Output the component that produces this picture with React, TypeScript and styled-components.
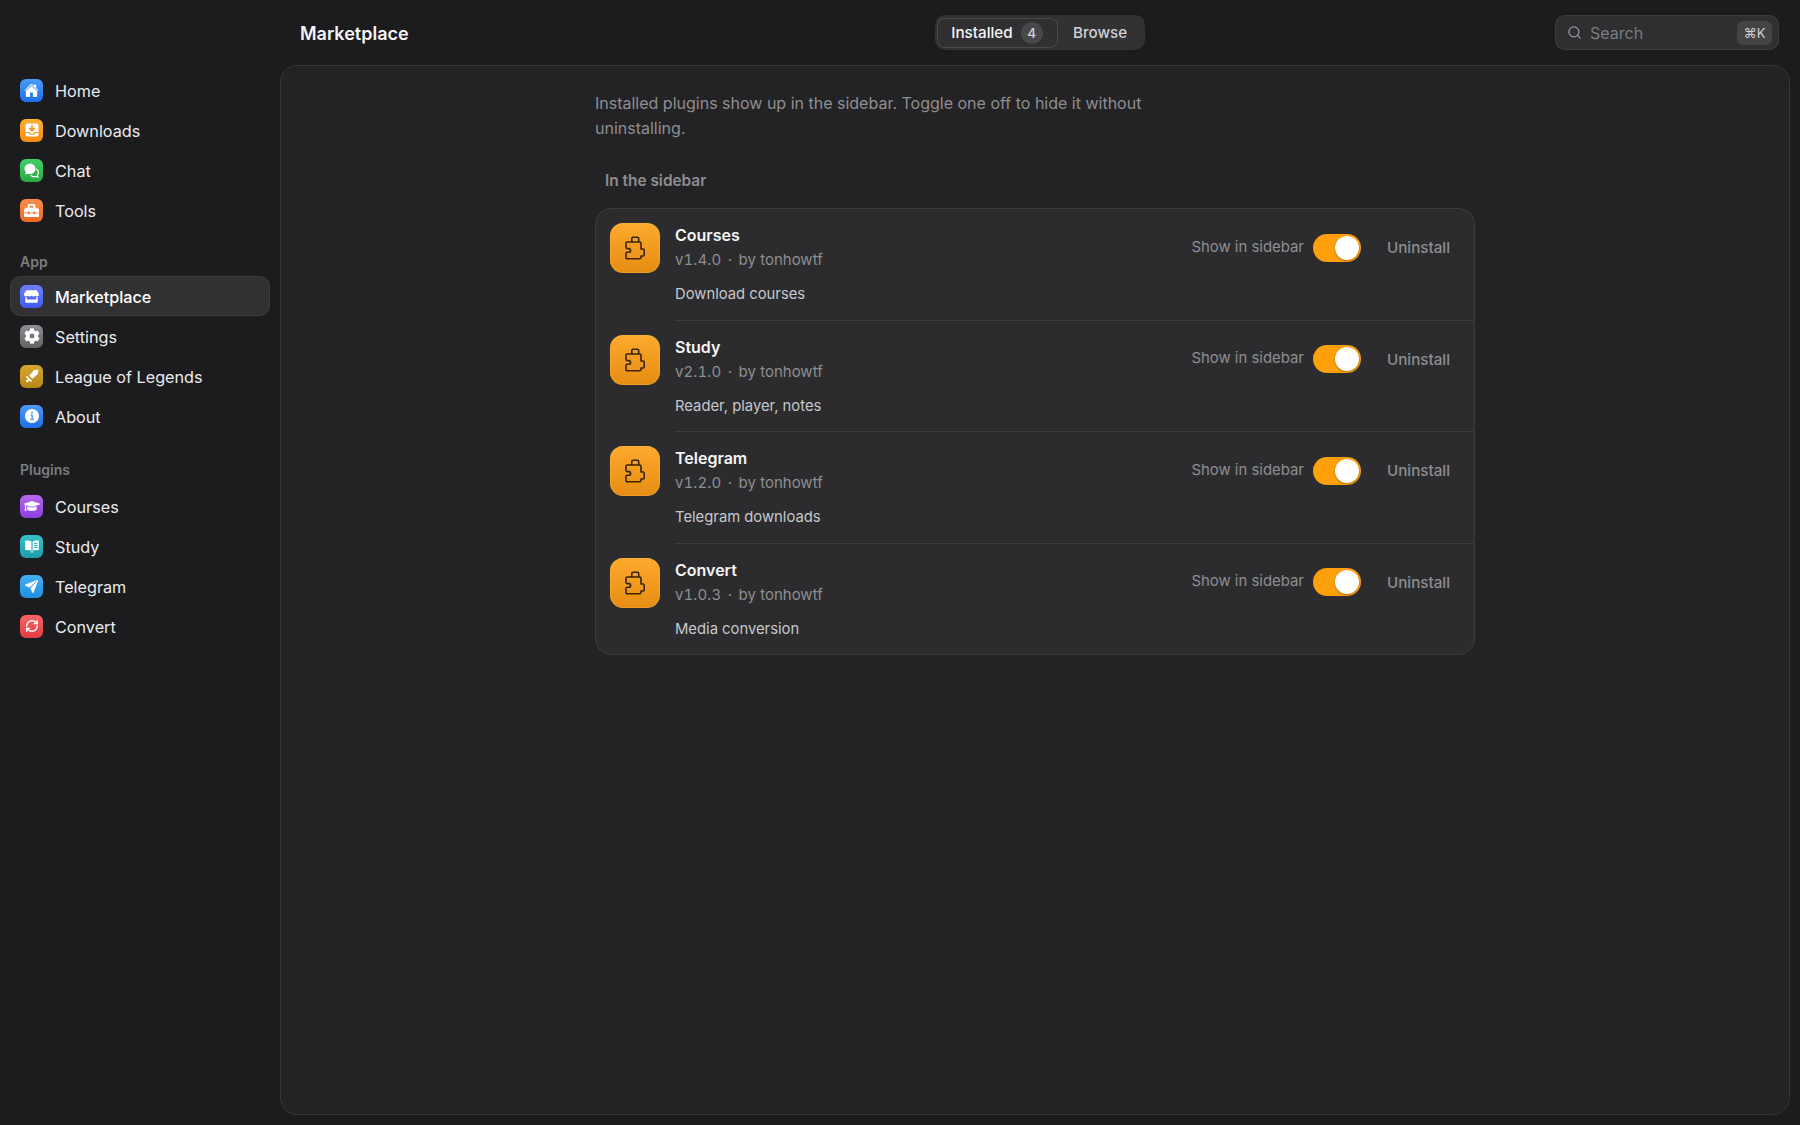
import { ReactNode } from 'react';
import styled, { createGlobalStyle } from 'styled-components';
import { Search, RefreshCw } from 'lucide-react';
import { IoHome, IoInformationCircle, IoPaperPlane } from 'react-icons/io5';
import { FaToolbox, FaStore, FaCog, FaGraduationCap } from 'react-icons/fa';

const GlobalStyle = createGlobalStyle`
  html, body {
    margin: 0;
    height: 100%;
    background: #1c1c1e;
  }
  body {
    font-family: Inter, 'Liberation Sans', sans-serif;
    color: #f2f2f7;
    -webkit-font-smoothing: antialiased;
  }
  #root {
    height: 100%;
  }
`;

const DownloadGlyph = () => (
  <svg width="16" height="16" viewBox="0 0 16 16">
    <rect x="1.5" y="1.5" width="13" height="13" rx="2" fill="#fff" />
    <path d="M8 3.5v5M5.6 6.4 8 8.8l2.4-2.4" stroke="#f28c12" strokeWidth="1.5" fill="none" strokeLinecap="round" strokeLinejoin="round" />
    <path d="M1.5 10.5h3.2l1 1.5h4.6l1-1.5h3.2" stroke="#f28c12" strokeWidth="1.2" fill="none" />
  </svg>
);

const ChatGlyph = () => (
  <svg width="17" height="17" viewBox="0 0 17 17">
    <path d="M7 1.5a5.6 5.6 0 0 1 5.6 5.3A5.6 5.6 0 0 1 7 12a6 6 0 0 1-2-.3L2.2 12.6l.7-2.5A5.3 5.3 0 0 1 1.4 6.8 5.6 5.6 0 0 1 7 1.5z" fill="#fff" />
    <path d="M13.6 7.2a4 4 0 0 1 1.8 3.4c0 1-.4 1.9-1 2.6l.5 2-2.2-.7a4.8 4.8 0 0 1-4.7-1" stroke="#fff" strokeWidth="1.2" fill="none" strokeLinecap="round" />
  </svg>
);

const SwordGlyph = () => (
  <svg width="16" height="16" viewBox="0 0 16 16" fill="#fff">
    <path d="M14.5 1.5 10 2.2 5.2 7.6l3.2 3.2 5.4-4.8z" />
    <path d="M3 7.8l5.2 5.2-1.1 1.1-1.6-1.6-2.2 2.2-1.6-1.6 2.2-2.2-2-2z" />
  </svg>
);

const BookGlyph = () => (
  <svg width="16" height="16" viewBox="0 0 16 16">
    <path d="M1.2 2.6c2.2-.4 4.6-.2 6.2.8v9.4c-1.6-.9-4-1.1-6.2-.7z" fill="#fff" />
    <path d="M14.8 2.6c-2.2-.4-4.6-.2-6.2.8v9.4c1.6-.9 4-1.1 6.2-.7z" fill="#fff" />
    <path d="M10 5.4h3.4M10 7.4h3.4M10 9.4h3.4" stroke="#2aa9b8" strokeWidth="1" />
    <path d="M7.4 13h1.2v2L8 14.5l-.6.5z" fill="#fff" />
  </svg>
);

const PuzzleGlyph = () => (
  <svg width="24" height="24" viewBox="0 0 24 24" fill="none" stroke="#3a2503" strokeWidth="1.6" strokeLinejoin="round">
    <path d="M8.8 6V2.4c0-.8.5-1.2 1.2-1.2h4.500c.7 0 1.200.4 1.200 1.200V6" />
    <path d="M4.200 6h12.600c.7 0 1.200.5 1.200 1.200V13h2c.8 0 1.200.5 1.200 1.200v4.600c0 .7-.4 1.200-1.200 1.200h-2v1.500c0 .7-.5 1.200-1.200 1.200H4.200c-.7 0-1.200-.5-1.200-1.200v-4.300c0-.6.4-1 1-1h2c1 0 1.600-.7 1.600-1.800s-.6-1.800-1.600-1.800H4c-.6 0-1-.4-1-1V7.200C3 6.500 3.500 6 4.200 6z" />
  </svg>
);

type NavEntry = { label: string; from: string; to: string; icon: ReactNode; active?: boolean };

const mainNav: NavEntry[] = [
  { label: 'Home', from: '#4a9bfa', to: '#1f6fe8', icon: <IoHome size={15} /> },
  { label: 'Downloads', from: '#ffb02e', to: '#f28c12', icon: <DownloadGlyph /> },
  { label: 'Chat', from: '#46d066', to: '#28a745', icon: <ChatGlyph /> },
  { label: 'Tools', from: '#ff8d4d', to: '#e86a20', icon: <FaToolbox size={15} /> },
];

const appNav: NavEntry[] = [
  { label: 'Marketplace', from: '#6a80ff', to: '#3f5cf0', icon: <FaStore size={15} />, active: true },
  { label: 'Settings', from: '#8e8e93', to: '#636366', icon: <FaCog size={16} /> },
  { label: 'League of Legends', from: '#d9a72e', to: '#b5851a', icon: <SwordGlyph /> },
  { label: 'About', from: '#4a9bfa', to: '#1f6fe8', icon: <IoInformationCircle size={18} /> },
];

const pluginNav: NavEntry[] = [
  { label: 'Courses', from: '#b469f0', to: '#8b3fd9', icon: <FaGraduationCap size={16} /> },
  { label: 'Study', from: '#36c0c8', to: '#1f9cab', icon: <BookGlyph /> },
  { label: 'Telegram', from: '#45aef5', to: '#2090e0', icon: <IoPaperPlane size={15} /> },
  { label: 'Convert', from: '#fb6468', to: '#e03d42', icon: <RefreshCw size={14} strokeWidth={2.4} /> },
];

const plugins = [
  { name: 'Courses', version: 'v1.4.0', description: 'Download courses' },
  { name: 'Study', version: 'v2.1.0', description: 'Reader, player, notes' },
  { name: 'Telegram', version: 'v1.2.0', description: 'Telegram downloads' },
  { name: 'Convert', version: 'v1.0.3', description: 'Media conversion' },
];

const NavRows = ({ items }: { items: NavEntry[] }) => (
  <>
    {items.map((item) => (
      <NavRow key={item.label} $active={item.active}>
        <NavIcon $from={item.from} $to={item.to}>
          {item.icon}
        </NavIcon>
        <NavText>{item.label}</NavText>
      </NavRow>
    ))}
  </>
);

const App = () => {
  return (
    <Shell>
      <GlobalStyle />
      <Sidebar>
        <NavRows items={mainNav} />
        <SectionLabel $top={23} $bottom={5}>App</SectionLabel>
        <NavRows items={appNav} />
        <SectionLabel $top={25} $bottom={7}>Plugins</SectionLabel>
        <NavRows items={pluginNav} />
      </Sidebar>
      <Main>
        <TopBar>
          <PageTitle>Marketplace</PageTitle>
          <Segments>
            <Segment $active>
              Installed
              <CountBadge>4</CountBadge>
            </Segment>
            <Segment>Browse</Segment>
          </Segments>
          <SearchBox>
            <Search size={15} color="#98989d" strokeWidth={2} />
            <SearchText>Search</SearchText>
            <ShortcutKey>⌘K</ShortcutKey>
          </SearchBox>
        </TopBar>
        <Panel>
          <Content>
            <Intro>
              Installed plugins show up in the sidebar. Toggle one off to hide it without uninstalling.
            </Intro>
            <GroupTitle>In the sidebar</GroupTitle>
            <Card>
              {plugins.map((plugin) => (
                <PluginRow key={plugin.name}>
                  <PluginIcon>
                    <PuzzleGlyph />
                  </PluginIcon>
                  <PluginBody>
                    <PluginInfo>
                      <PluginName>{plugin.name}</PluginName>
                      <PluginMeta>
                        <VersionText>{plugin.version}</VersionText>
                        <MetaDot>·</MetaDot>
                        by tonhowtf
                      </PluginMeta>
                      <PluginDescription>{plugin.description}</PluginDescription>
                    </PluginInfo>
                    <PluginActions>
                      <ToggleLabel>Show in sidebar</ToggleLabel>
                      <Toggle>
                        <Knob />
                      </Toggle>
                      <UninstallButton>Uninstall</UninstallButton>
                    </PluginActions>
                  </PluginBody>
                </PluginRow>
              ))}
            </Card>
          </Content>
        </Panel>
      </Main>
    </Shell>
  );
};

const Shell = styled.div`
  display: flex;
  height: 1125px;
  overflow: hidden;
  background: #1c1c1e;
`;

const Sidebar = styled.aside`
  width: 280px;
  flex: none;
  box-sizing: border-box;
  padding: 70px 10px 0;
`;

const NavRow = styled.div<{ $active?: boolean }>`
  display: flex;
  align-items: center;
  gap: 12px;
  height: 40px;
  box-sizing: border-box;
  padding-left: 10px;
  border-radius: 11px;
  font-size: 16.2px;
  font-weight: ${(p) => (p.$active ? 500 : 400)};
  color: ${(p) => (p.$active ? '#fff' : '#ebebf0')};
  background: ${(p) => (p.$active ? '#313133' : 'transparent')};
  box-shadow: ${(p) => (p.$active ? 'inset 0 0 0 1px #3c3c3e' : 'none')};
`;

const NavText = styled.span`
  padding-top: 1px;
`;

const NavIcon = styled.span<{ $from: string; $to: string }>`
  width: 23px;
  height: 23px;
  flex: none;
  display: flex;
  align-items: center;
  justify-content: center;
  border-radius: 6px;
  color: #fff;
  background: linear-gradient(180deg, ${(p) => p.$from}, ${(p) => p.$to});
`;

const SectionLabel = styled.div<{ $top: number; $bottom: number }>`
  margin: ${(p) => p.$top}px 0 ${(p) => p.$bottom}px 10px;
  height: 18px;
  line-height: 18px;
  font-size: 14px;
  font-weight: 600;
  color: #7c7c80;
`;

const Main = styled.main`
  flex: 1;
  min-width: 0;
  display: flex;
  flex-direction: column;
`;

const TopBar = styled.header`
  height: 65px;
  flex: none;
  box-sizing: border-box;
  padding: 15px 21px 15px 20px;
  display: grid;
  grid-template-columns: 1fr auto 1fr;
  align-items: center;
`;

const PageTitle = styled.h1`
  margin: 2px 0 0;
  font-size: 18px;
  font-weight: 600;
  color: #f5f5f7;
`;

const Segments = styled.div`
  display: flex;
  align-items: center;
  height: 35px;
  width: 210px;
  box-sizing: border-box;
  padding: 0 2px;
  border-radius: 10px;
  background: #323234;
`;

const Segment = styled.div<{ $active?: boolean }>`
  display: flex;
  align-items: center;
  justify-content: center;
  gap: 8px;
  height: 30px;
  box-sizing: border-box;
  flex: ${(p) => (p.$active ? '0 0 121px' : '1')};
  border-radius: 8px;
  font-size: 15.2px;
  font-weight: 500;
  color: ${(p) => (p.$active ? '#f5f5f7' : '#d1d1d6')};
  background: ${(p) => (p.$active ? '#303032' : 'transparent')};
  box-shadow: ${(p) => (p.$active ? 'inset 0 0 0 1px #48484a' : 'none')};
`;

const CountBadge = styled.span`
  width: 22px;
  height: 22px;
  display: flex;
  align-items: center;
  justify-content: center;
  border-radius: 50%;
  background: #48484a;
  font-size: 13.5px;
  color: #d1d1d6;
`;

const SearchBox = styled.div`
  justify-self: end;
  width: 224px;
  height: 35px;
  box-sizing: border-box;
  display: flex;
  align-items: center;
  gap: 8px;
  padding: 0 7px 0 12px;
  border-radius: 10px;
  background: #2f2f31;
  box-shadow: inset 0 0 0 1px #3c3c3e;
`;

const SearchText = styled.span`
  flex: 1;
  font-size: 16px;
  color: #7c7c80;
`;

const ShortcutKey = styled.kbd`
  width: 35px;
  height: 24px;
  display: flex;
  align-items: center;
  justify-content: center;
  border-radius: 6px;
  background: #444446;
  font-family: Inter, 'DejaVu Sans', sans-serif;
  font-size: 13px;
  color: #d1d1d6;
`;

const Panel = styled.section`
  flex: 1;
  min-height: 0;
  margin: 0 10px 10px 0;
  box-sizing: border-box;
  border: 1px solid #363638;
  border-radius: 17px;
  background: #232325;
  padding-top: 25px;
`;

const Content = styled.div`
  width: 880px;
  margin: 0 auto;
`;

const Intro = styled.p`
  margin: 0;
  max-width: 570px;
  font-size: 16px;
  line-height: 25px;
  color: #8e8e93;
`;

const GroupTitle = styled.h2`
  margin: 30px 0 17px 10px;
  font-size: 15.4px;
  line-height: 20px;
  font-weight: 600;
  color: #8e8e93;
`;

const Card = styled.div`
  border: 1px solid #3c3c3e;
  border-radius: 16px;
  background: #2c2c2e;
  overflow: hidden;
`;

const PluginRow = styled.div`
  display: flex;
  gap: 15px;
  padding-left: 14px;
  height: 111.5px;
  box-sizing: border-box;

  &:last-child {
    height: 110px;
  }
`;

const PluginIcon = styled.div`
  width: 50px;
  height: 50px;
  margin-top: 14px;
  flex: none;
  display: flex;
  align-items: center;
  justify-content: center;
  border-radius: 13px;
  background: linear-gradient(180deg, #fdaa2d, #e58d12);
  box-shadow: inset 0 0 0 1px rgba(255, 200, 110, 0.25);
`;

const PluginBody = styled.div`
  flex: 1;
  min-width: 0;
  display: flex;
  justify-content: space-between;
  padding-top: 14px;
  border-bottom: 1px solid #3c3c3e;

  ${PluginRow}:last-child & {
    border-bottom: none;
  }
`;

const PluginInfo = styled.div`
  display: flex;
  flex-direction: column;
`;

const PluginName = styled.div`
  font-size: 16px;
  line-height: 25px;
  font-weight: 600;
  color: #f5f5f7;
`;

const PluginMeta = styled.div`
  font-size: 15px;
  line-height: 24px;
  color: #8e8e93;
`;

const VersionText = styled.span`
  font-variant-numeric: tabular-nums;
  letter-spacing: 0.1px;
`;

const MetaDot = styled.span`
  margin: 0 6.5px;
`;

const PluginDescription = styled.div`
  margin-top: 10px;
  font-size: 14.8px;
  line-height: 24px;
  color: #c7c7cc;
`;

const PluginActions = styled.div`
  display: flex;
  align-items: center;
  align-self: flex-start;
  height: 28px;
  margin-top: 10.5px;
`;

const ToggleLabel = styled.span`
  margin-bottom: 2px;
  font-size: 14.9px;
  color: #8e8e93;
`;

const Toggle = styled.div`
  width: 48px;
  height: 28px;
  margin-left: 9px;
  box-sizing: border-box;
  padding: 2px 2px 2px 22px;
  border-radius: 14px;
  background: #ff9f0a;
`;

const Knob = styled.div`
  width: 24px;
  height: 24px;
  border-radius: 50%;
  background: #fff;
  box-shadow: 0 1px 2px rgba(0, 0, 0, 0.3);
`;

const UninstallButton = styled.button`
  margin: 0 24px 0 26px;
  padding: 0;
  border: none;
  background: none;
  font-family: inherit;
  font-size: 15.2px;
  font-weight: 500;
  color: #8e8e93;
`;

export default App;
